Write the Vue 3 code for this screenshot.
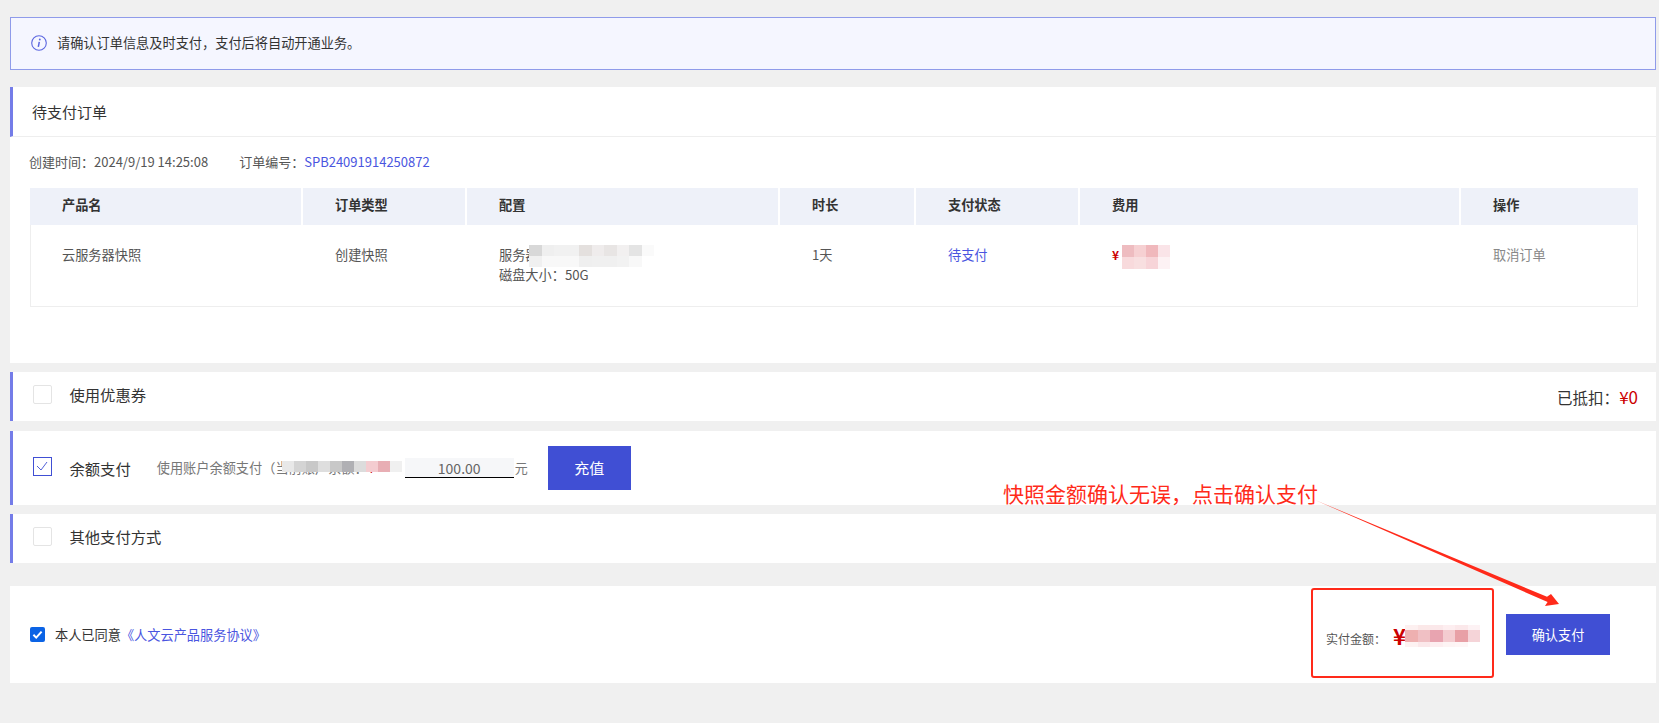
<template>
  <div class="page">
    <div class="alert">
      <svg class="alert-icon" viewBox="0 0 16 16" width="16" height="16">
        <circle cx="8" cy="8" r="7.3" fill="none" stroke="#5b66e0" stroke-width="1.1" />
        <circle cx="8.8" cy="4.5" r="0.95" fill="#5b66e0" />
        <path d="M8.3 6.8 L7.3 11.8" stroke="#5b66e0" stroke-width="1.5" fill="none" />
      </svg>
      <span>请确认订单信息及时支付，支付后将自动开通业务。</span>
    </div>

    <section class="order">
      <div class="order-title accent">待支付订单</div>
      <div class="order-body">
        <div class="meta">
          <span>创建时间：2024/9/19 14:25:08</span>
          <span>订单编号：<span class="blue">SPB24091914250872</span></span>
        </div>
        <div class="table">
          <div class="thead">
            <div v-for="col in columns" :key="col" class="th">{{ col }}</div>
          </div>
          <div class="tbody">
            <div class="td">云服务器快照</div>
            <div class="td">创建快照</div>
            <div class="td">服务器<br />磁盘大小：50G</div>
            <div class="td">1天</div>
            <div class="td blue">待支付</div>
            <div class="td price">¥</div>
            <div class="td muted">取消订单</div>
          </div>
        </div>
      </div>
    </section>

    <section class="row row-coupon accent">
      <span class="box"></span>
      <span class="row-label">使用优惠券</span>
      <span class="discount">已抵扣：<em>¥0</em></span>
    </section>

    <section class="row row-balance accent">
      <span class="box box-on">
        <svg viewBox="0 0 18 18" width="18" height="18">
          <path d="M4 9 L8 13 L14 5" fill="none" stroke="#404fd4" stroke-width="0.9" />
        </svg>
      </span>
      <span class="row-label">余额支付</span>
      <span class="balance-desc">使用账户余额支付（当前账户余额：<i>¥</i></span>
      <span class="amount">100.00</span>
      <span class="unit">元</span>
      <button class="btn btn-charge">充值</button>
    </section>

    <section class="row row-other accent">
      <span class="box"></span>
      <span class="row-label">其他支付方式</span>
    </section>

    <section class="footer">
      <span class="agree-box">
        <svg viewBox="0 0 15 15" width="15" height="15">
          <path d="M3.4 7.8 L6.2 10.6 L11.6 4.6" fill="none" stroke="#fff" stroke-width="2" />
        </svg>
      </span>
      <span class="agree">本人已同意</span>
      <span class="blue agree-link">《人文云产品服务协议》</span>
      <span class="pay-label">实付金额：</span>
      <span class="pay-yen">¥</span>
      <button class="btn btn-pay">确认支付</button>
    </section>

    <!-- 打码块 -->
    <div
      v-for="m in mosaics"
      :key="m.name"
      class="mosaic"
      :style="{ left: m.x + 'px', top: m.y + 'px', gridTemplateColumns: `repeat(${m.cols}, ${m.w}px)`, gridAutoRows: m.h + 'px' }"
    >
      <i v-for="(c, i) in m.cells" :key="i" :style="{ background: c }"></i>
    </div>

    <!-- 截图标注 -->
    <div class="note">快照金额确认无误，点击确认支付</div>
    <div class="note-box"></div>
    <svg class="note-arrow" viewBox="0 0 1659 723" width="1659" height="723">
      <polygon points="1315,500 1547,596.8 1551,594 1559,604 1545,606 1547.6,602" fill="#ff2a1a" />
    </svg>
  </div>
</template>

<script setup>
const columns = ['产品名', '订单类型', '配置', '时长', '支付状态', '费用', '操作']

const mosaics = [
  {
    name: 'config', x: 529, y: 245, cols: 10, w: 12.5, h: 11,
    cells: [
      '#d8d8d8', '#efefef', '#f1f1f1', '#f1f1f1', '#e4e0de', '#efecec', '#e8e5e4', '#f2f0f0', '#e4e4e4', '#fafafa',
      '#f0f0f0', '#f8f8f8', '#f8f8f8', '#f8f8f8', '#efefef', '#f0f0f0', '#f0f0f0', '#f2f2f2', '#f8f8f8', '#ffffff'
    ]
  },
  {
    name: 'fee', x: 1122, y: 245, cols: 4, w: 12, h: 12,
    cells: ['#eebcc0', '#f6d0d2', '#f0b8bc', '#fae4e8', '#f8dadc', '#f8dfe0', '#f7d4d8', '#fdf2f4']
  },
  {
    name: 'balance', x: 282, y: 461, cols: 10, w: 12, h: 11,
    cells: ['#e8e8e8', '#d4d4d4', '#c8c8c8', '#dedede', '#c8c8c8', '#b0b0b4', '#dcdcdc', '#f4ccd0', '#e8aeb4', '#f0f0f0']
  },
  {
    name: 'pay-top', x: 1405, y: 625, cols: 6, w: 12.5, h: 5,
    cells: ['#fdf0f0', '#fbe8e8', '#fbe8ea', '#fdeef0', '#fbe8ea', '#fdf2f4']
  },
  {
    name: 'pay-mid', x: 1405, y: 630, cols: 6, w: 12.5, h: 12,
    cells: ['#eeb0b0', '#f0c0c4', '#e8a4b0', '#f4ccd0', '#e8a0a6', '#f5d4d8']
  },
  {
    name: 'pay-bot', x: 1405, y: 642, cols: 6, w: 12.5, h: 5,
    cells: ['#fdf2f2', '#fbe8ea', '#fdeef0', '#fdf4f4', '#fef6f6', '#ffffff']
  }
]
</script>

<style>
html, body {
  background: #f0f0f0;
}
</style>

<style scoped>
.page {
  position: relative;
  display: flex;
  flex-direction: column;
  box-sizing: border-box;
  width: 1659px;
  height: 723px;
  padding: 17px 3px 0 10px;
  overflow: hidden;
  background: #f0f0f0;
  color: #333;
  font: 13.2px/20px "Noto Sans CJK SC", sans-serif;
}

.blue {
  color: #4a55e0;
}

.accent {
  border-left: 3px solid #747ce8;
}

.row.accent {
  background: #fff;
}

.alert {
  display: flex;
  align-items: center;
  gap: 10px;
  box-sizing: border-box;
  height: 53px;
  padding: 0 0 2px 20px;
  border: 1px solid #8f9bea;
  background: #f5f6ff;
}

.alert-icon {
  flex: none;
}

.order {
  height: 276px;
  margin-top: 17px;
  background: #fff;
}

.order-title {
  box-sizing: border-box;
  height: 50px;
  padding-left: 19px;
  border-bottom: 1px solid #eee;
  color: #333;
  font-size: 15px;
  line-height: 50px;
}

.order-body {
  padding: 15px 18px 0 20px;
}

.meta {
  display: flex;
  gap: 31px;
  margin-left: -1px;
  color: #555;
  font-size: 13px;
}

.table {
  margin-top: 16px;
}

.thead,
.tbody {
  display: grid;
  grid-template-columns: 271px 162px 311px 134px 162px 379px 1fr;
  column-gap: 2px;
}

.th {
  height: 37px;
  padding-left: 32px;
  background: #eef1f9;
  font-weight: 700;
  line-height: 34px;
}

.tbody {
  box-sizing: border-box;
  height: 82px;
  padding-top: 20px;
  border: 1px solid #eee;
  border-top: 0;
  color: #555;
}

.td {
  padding-left: 31px;
}

.tbody .blue {
  color: #4a55e0;
}

.price {
  color: #c00;
  font-size: 12px;
  font-weight: 700;
}

.muted {
  color: #888;
}

.row {
  display: flex;
  align-items: center;
  box-sizing: border-box;
  padding-left: 20px;
}

.row-coupon {
  height: 49px;
  margin-top: 9px;
}

.row-balance {
  height: 74px;
  margin-top: 10px;
}

.row-other {
  height: 49px;
  margin-top: 9px;
}

.row-coupon .row-label,
.row-other .row-label {
  margin-top: -6px;
}

.box {
  display: block;
  flex: none;
  box-sizing: border-box;
  width: 19px;
  height: 19px;
  margin-top: -4px;
  border: 1px solid #e4e4e4;
  border-radius: 2px;
}

.box-on {
  border-color: #404fd4;
  border-radius: 0;
}

.box-on svg {
  display: block;
  margin: -1px;
}

.row-label {
  margin-left: 17.5px;
  color: #333;
  font-size: 15.3px;
}

.discount {
  margin-left: auto;
  padding-right: 18px;
  font-size: 15.5px;
}

.discount em {
  color: #c00;
  font-size: 17px;
  font-style: normal;
}

.balance-desc {
  width: 248px;
  margin-left: 26px;
  color: #777;
  white-space: nowrap;
}

.balance-desc i {
  color: #c00;
  font-style: normal;
}

.amount {
  box-sizing: border-box;
  width: 109px;
  height: 20px;
  border-bottom: 1px solid #000;
  background: #f6f7f9;
  color: #666;
  font-size: 14px;
  line-height: 20px;
  text-align: center;
}

.unit {
  margin-left: 1px;
  color: #777;
  font-size: 13px;
}

.btn {
  border: 0;
  background: #404fd4;
  color: #fff;
  font: inherit;
}

.btn-charge {
  width: 83px;
  height: 44px;
  margin-left: 20px;
  font-size: 15px;
}

.footer {
  display: flex;
  align-items: center;
  height: 97px;
  margin-top: 23px;
  padding-left: 20px;
  background: #fff;
}

.agree-box {
  flex: none;
  width: 15px;
  height: 15px;
  border-radius: 2px;
  background: #0b63e5;
}

.agree-box svg {
  display: block;
}

.agree {
  margin-left: 10px;
}

.pay-label {
  margin-left: auto;
  padding-top: 8px;
  color: #555;
  font-size: 12px;
}

.pay-yen {
  width: 113px;
  margin-left: 7px;
  color: #c00;
  font-size: 22px;
  font-weight: 700;
  line-height: 30px;
}

.btn-pay {
  width: 104px;
  height: 41px;
  margin-right: 46px;
}

.mosaic {
  position: absolute;
  display: grid;
}

.mosaic i {
  display: block;
}

.note {
  position: absolute;
  left: 1003px;
  top: 479px;
  color: #ff2a1a;
  font-size: 21px;
  line-height: 28px;
  white-space: nowrap;
}

.note-box {
  position: absolute;
  left: 1311px;
  top: 588px;
  box-sizing: border-box;
  width: 183px;
  height: 90px;
  border: 2.5px solid #ff2a1a;
  border-radius: 3px;
}

.note-arrow {
  position: absolute;
  left: 0;
  top: 0;
  pointer-events: none;
}
</style>
